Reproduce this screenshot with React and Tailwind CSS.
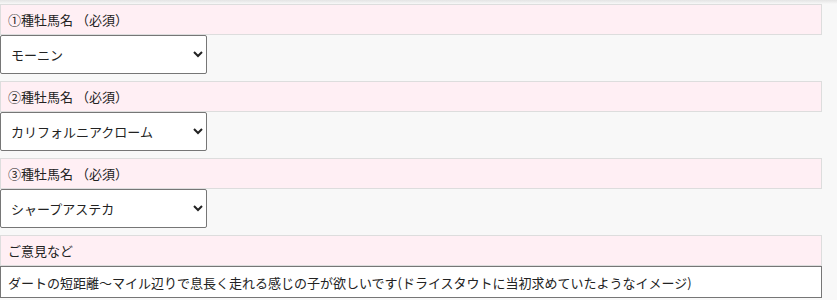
import { useState } from "react";

const font = { fontFamily: '"Noto Sans CJK JP", "Noto Sans", sans-serif' };

const stallions = [
  { label: "①種牡馬名 （必須）", value: "モーニン" },
  { label: "②種牡馬名 （必須）", value: "カリフォルニアクローム" },
  { label: "③種牡馬名 （必須）", value: "シャープアステカ" },
];

function Label({ children }) {
  return (
    <div className="h-[31px] w-[822px] border border-[#dddddd] bg-[#ffeff4] pl-[7px] text-[13px] leading-[29px] text-[#222]">
      {children}
    </div>
  );
}

export default function App() {
  const [picks, setPicks] = useState(stallions.map((s) => s.value));
  const [comment, setComment] = useState(
    "ダートの短距離～マイル辺りで息長く走れる感じの子が欲しいです(ドライスタウトに当初求めていたようなイメージ)"
  );

  return (
    <div className="min-h-[300px] w-[837px] bg-[#f8f8f8]" style={font}>
      <div className="h-[4px] bg-gradient-to-b from-[#e4e4e4] to-[#f8f8f8]" />
      <div className="flex flex-col">
        {stallions.map((s, i) => (
          <div key={i} className="mb-[7px] flex flex-col">
            <Label>{s.label}</Label>
            <select
              value={picks[i]}
              onChange={(e) => {
                const next = [...picks];
                next[i] = e.target.value;
                setPicks(next);
              }}
              className="h-[39px] w-[207px] rounded-[2px] border border-[#767676] bg-white pl-[6px] text-[13px] text-[#222]"
              style={font}
            >
              <option>{s.value}</option>
            </select>
          </div>
        ))}
        <div className="flex flex-col">
          <Label>ご意見など</Label>
          <input
            type="text"
            value={comment}
            onChange={(e) => setComment(e.target.value)}
            className="h-[32px] w-[822px] border border-[#767676] bg-white pl-[7px] text-[13px] text-[#222] outline-none"
            style={font}
          />
        </div>
      </div>
    </div>
  );
}
